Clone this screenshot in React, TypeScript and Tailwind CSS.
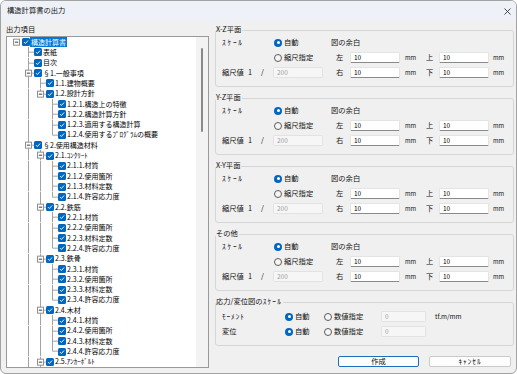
import React from 'react';

type TreeNode = {
  label: string;
  children?: TreeNode[];
  more?: boolean;
  selected?: boolean;
};

type Row = { node: TreeNode; level: number; guides: boolean[]; last: boolean };

const details = (p: string): TreeNode[] => [
  { label: `${p}.1.材質` },
  { label: `${p}.2.使用箇所` },
  { label: `${p}.3.材料定数` },
  { label: `${p}.4.許容応力度` },
];

const outline: TreeNode = {
  label: '構造計算書',
  selected: true,
  children: [
    { label: '表紙' },
    { label: '目次' },
    {
      label: '§1.一般事項',
      children: [
        { label: '1.1.建物概要' },
        {
          label: '1.2.設計方針',
          children: [
            { label: '1.2.1.構造上の特徴' },
            { label: '1.2.2.構造計算方針' },
            { label: '1.2.3.適用する構造計算' },
            { label: '1.2.4.使用するﾌﾟﾛｸﾞﾗﾑの概要' },
          ],
        },
      ],
    },
    {
      label: '§2.使用構造材料',
      more: true,
      children: [
        { label: '2.1.ｺﾝｸﾘｰﾄ', children: details('2.1') },
        { label: '2.2.鉄筋', children: details('2.2') },
        { label: '2.3.鉄骨', children: details('2.3') },
        { label: '2.4.木材', children: details('2.4') },
        { label: '2.5.ｱﾝｶｰﾎﾞﾙﾄ', more: true, children: [] },
      ],
    },
  ],
};

const flatten = (
  node: TreeNode,
  level: number,
  guides: boolean[],
  last: boolean,
  out: Row[] = [],
) => {
  out.push({ node, level, guides, last });
  const kids = node.children ?? [];
  kids.forEach((child, i) => {
    const childLast = i === kids.length - 1 && !child.more;
    flatten(child, level + 1, [...guides, level > 0 && !last], childLast, out);
  });
  return out;
};

const ROW_H = 10.32;
const MID = ROW_H / 2;
const LINE = '#a3a3a3';

function GuideCell({ through }: { through: boolean }) {
  return (
    <svg width="12" height={ROW_H} className="shrink-0">
      {through && <line x1="6.5" y1="0" x2="6.5" y2={ROW_H} stroke={LINE} />}
    </svg>
  );
}

function BranchCell({ row }: { row: Row }) {
  const hasBox = row.node.children !== undefined;
  return (
    <svg width="12" height={ROW_H} className="shrink-0">
      {row.level > 0 && (
        <>
          <line x1="6.5" y1="0" x2="6.5" y2={row.last ? MID : ROW_H} stroke={LINE} />
          <line x1="6.5" y1={MID} x2="12" y2={MID} stroke={LINE} />
        </>
      )}
      {hasBox && (
        <>
          <rect x="3.5" y={MID - 3} width="6" height="6" fill="white" stroke="#8f8f8f" />
          <line x1="4.8" y1={MID} x2="8.2" y2={MID} stroke="#3a3a3a" />
        </>
      )}
    </svg>
  );
}

function CheckBox() {
  return (
    <span className="flex h-[8px] w-[8px] shrink-0 items-center justify-center rounded-[1.5px] bg-[#0067c0]">
      <svg width="6" height="6" viewBox="0 0 6 6">
        <path d="M1 3.1 2.4 4.5 5.1 1.5" fill="none" stroke="white" strokeWidth="0.9" />
      </svg>
    </span>
  );
}

function TreeRow({ row }: { row: Row }) {
  return (
    <div className="flex h-[10.32px] items-center">
      {row.guides.map((g, i) => (
        <GuideCell key={i} through={g} />
      ))}
      <BranchCell row={row} />
      <CheckBox />
      <span
        className={
          row.node.selected
            ? 'flex h-[10px] items-center whitespace-nowrap bg-[#0078d7] px-[1px] text-white'
            : 'flex h-[10px] items-center whitespace-nowrap px-[1px] text-black'
        }
      >
        {row.node.label}
      </span>
    </div>
  );
}

function Radio({ on }: { on?: boolean }) {
  return on ? (
    <span className="flex h-[8px] w-[8px] shrink-0 items-center justify-center rounded-full bg-[#0067c0]">
      <span className="h-[3px] w-[3px] rounded-full bg-white" />
    </span>
  ) : (
    <span className="h-[8px] w-[8px] shrink-0 rounded-full border border-[#5c5c5c] bg-[#f6f6f6]" />
  );
}

function RadioLabel({ on, label }: { on?: boolean; label: string }) {
  return (
    <span className="flex items-center pl-[1px]">
      <Radio on={on} />
      <span className="ml-[2px] whitespace-nowrap">{label}</span>
    </span>
  );
}

function Field({
  value,
  disabled,
  className = '',
}: {
  value: string;
  disabled?: boolean;
  className?: string;
}) {
  return (
    <div
      className={`flex h-[11px] items-center rounded-[1.5px] border pl-[3px] text-[6.5px] ${
        disabled
          ? 'border-[#e2e2e2] bg-[#f6f6f6] text-[#a0a0a0]'
          : 'border-[#e4e4e4] border-b-[#8a8a8a] bg-white text-black'
      } ${className}`}
    >
      {value}
    </div>
  );
}

function Group({
  title,
  className = '',
  children,
}: {
  title: React.ReactNode;
  className?: string;
  children: React.ReactNode;
}) {
  return (
    <div className={`shrink-0 rounded-[3px] border border-[#d6d6d6] ${className}`}>
      <div className="-mt-[6px] flex h-[10px] items-center">
        <span className="whitespace-nowrap bg-[#f0f0f0] pr-[1px]">{title}</span>
      </div>
      {children}
    </div>
  );
}

function PlaneGroup({ title }: { title: string }) {
  return (
    <Group title={title} className="h-[57px]">
      <div className="grid grid-cols-[51px_58px_19px_50px_26px_13px_50px_1fr] grid-rows-[15px_15px_15px] items-center pl-[6px]">
        <span className="tracking-[1.8px]">ｽｹｰﾙ</span>
        <RadioLabel on label="自動" />
        <span className="col-span-6">図の余白</span>

        <span />
        <RadioLabel label="縮尺指定" />
        <span className="pl-[5px]">左</span>
        <Field value="10" />
        <span className="pl-[5px] text-[6px]">mm</span>
        <span>上</span>
        <Field value="10" />
        <span className="pl-[4px] text-[6px]">mm</span>

        <span className="flex items-center">
          <span>縮尺値</span>
          <span className="ml-[4px]">1</span>
          <span className="ml-[9px]">/</span>
        </span>
        <Field value="200" disabled className="w-[50px]" />
        <span className="pl-[5px]">右</span>
        <Field value="10" />
        <span className="pl-[5px] text-[6px]">mm</span>
        <span>下</span>
        <Field value="10" />
        <span className="pl-[4px] text-[6px]">mm</span>
      </div>
    </Group>
  );
}

function StressGroup() {
  return (
    <Group
      title={
        <>
          応力/変位図の<span className="tracking-[1.2px]">ｽｹｰﾙ</span>
        </>
      }
      className="h-[44px]"
    >
      <div className="mt-[2px] grid grid-cols-[62px_39px_57px_46px_1fr] grid-rows-[15px_15px] items-center pl-[6px]">
        <span className="tracking-[0.9px]">ﾓｰﾒﾝﾄ</span>
        <RadioLabel on label="自動" />
        <RadioLabel label="数値指定" />
        <Field value="0" disabled className="ml-[1px] w-[45px]" />
        <span className="pl-[9px] text-[6.5px]">tf.m/mm</span>

        <span>変位</span>
        <RadioLabel on label="自動" />
        <RadioLabel label="数値指定" />
        <Field value="0" disabled className="ml-[1px] w-[45px]" />
        <span />
      </div>
    </Group>
  );
}

export default function App() {
  const rows = flatten(outline, 0, [], true);

  return (
    <div className="flex h-[374px] w-[517px] flex-col overflow-hidden rounded-[6px] border border-[#a3a3a3] bg-[#f0f0f0] font-['Noto_Sans_CJK_JP','Noto_Sans',sans-serif] text-[7.3px] leading-none text-[#111]">
      <div className="flex h-[20px] shrink-0 items-center justify-between bg-[#eef2f8] pl-[6px] pr-[5px]">
        <span>構造計算書の出力</span>
        <svg width="7" height="7" viewBox="0 0 7 7">
          <path d="M0.5 0.5 6.5 6.5 M6.5 0.5 0.5 6.5" stroke="#333" strokeWidth="0.9" />
        </svg>
      </div>

      <div className="flex flex-1">
        <div className="ml-[5px] flex w-[203px] flex-col">
          <div className="h-[15px] pt-[5px]">出力項目</div>
          <div className="flex h-[332px] border border-[#9a9a9a] bg-white">
            <div className="flex-1 overflow-hidden pl-[3px] text-[7px]">
              {rows.map((row, i) => (
                <TreeRow key={i} row={row} />
              ))}
            </div>
            <div className="flex w-[12px] justify-center bg-[#f3f3f3]">
              <div className="mt-[11px] h-[84px] w-[2px] rounded-full bg-[#8a8a8a]" />
            </div>
          </div>
        </div>

        <div className="ml-[6px] flex w-[299px] flex-col gap-[11px] pt-[9px]">
          <PlaneGroup title="X-Z平面" />
          <PlaneGroup title="Y-Z平面" />
          <PlaneGroup title="X-Y平面" />
          <PlaneGroup title="その他" />
          <StressGroup />
          <div className="-mt-[1px] flex justify-end gap-[10px] pr-[3px]">
            <button className="flex h-[11px] w-[81px] items-center justify-center rounded-[2px] border border-[#1f6dbd] bg-[#fdfdfd]">
              作成
            </button>
            <button className="flex h-[11px] w-[82px] items-center justify-center rounded-[2px] border border-[#c9c9c9] bg-[#fdfdfd] tracking-[1px]">
              ｷｬﾝｾﾙ
            </button>
          </div>
        </div>
      </div>
    </div>
  );
}
